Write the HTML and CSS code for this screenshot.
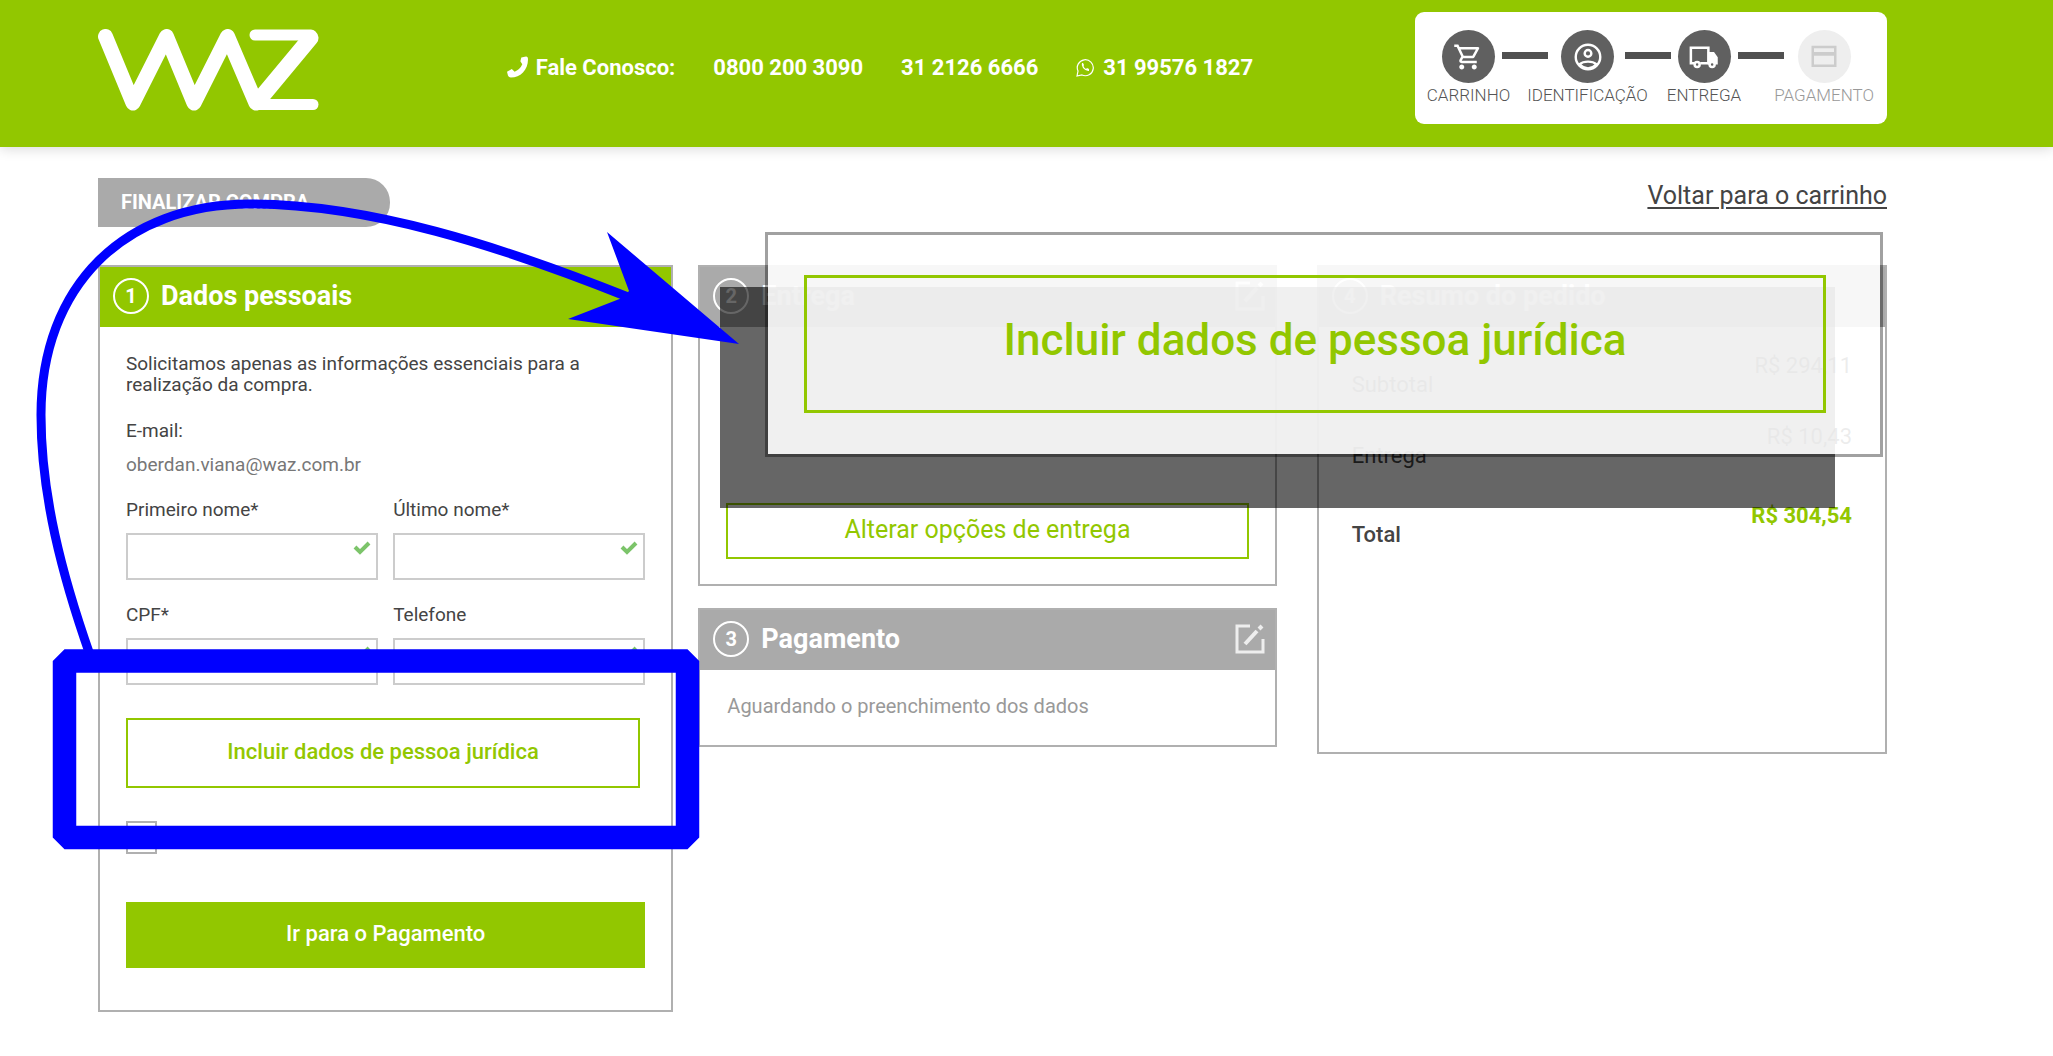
FILE: index.html
```html
<!DOCTYPE html>
<html lang="pt-BR">
<head>
    <meta charset="UTF-8">
    <meta name="viewport" content="width=device-width, initial-scale=1.0">
    <title>WAZ - Finalizar compra</title>
    <link rel="stylesheet" href="styles.css">
</head>
<body>
    <header class="topo">
        <a class="logo" href="#" aria-label="WAZ">
            <svg width="221" height="82" viewBox="0 0 221 82" fill="none" stroke="#fff" stroke-linecap="round" stroke-linejoin="round">
                <path d="M7.500 7.500 L35 74 L68.500 7.500 L96 74 L129.500 7.500 L158 74" stroke-width="15"/>
                <path d="M157 6 H213" stroke-width="11"/>
                <path d="M160 75.500 H215" stroke-width="11"/>
                <path d="M212.500 9 L161 71" stroke-width="16"/>
            </svg>
        </a>
        <ul class="contato">
            <li>
                <svg width="21" height="23" viewBox="0 0 22 23" fill="#fff"><path d="M15 1 L20 0 Q22 0 22 3 C22 14 14 22 4 22 Q2 22 1 20 L0 16 L5 13 L8 16 Q14 13 16 8 L14 5 Z"/></svg>
                Fale Conosco:
            </li>
            <li>0800 200 3090</li>
            <li>31 2126 6666</li>
            <li>
                <svg width="19" height="19" viewBox="0 0 19 19" fill="none" stroke="#fff" stroke-width="1.2"><path d="M1 18 L2 13 A8 8 0 1 1 6 17 Z"/><path d="M6 5 Q5 7 7 10 Q10 13.500 13 13 L13 11 L11 10 L10 11 Q8 10 7.500 8 L8 7 L7 5 Z" fill="#fff" stroke="none"/></svg>
                31 99576 1827
            </li>
        </ul>
        <ol class="etapas">
            <li class="etapa">
                <span class="bola"><svg width="30" height="30" viewBox="0 0 24 24" fill="#fff"><path d="M15.550 13c.75 0 1.410-.41 1.750-1.030l3.580-6.490A.996.996 0 0 0 20.010 4H5.210l-.94-2H1v2h2l3.600 7.590-1.350 2.440C4.520 15.370 5.480 17 7 17h12v-2H7l1.100-2h7.450zM6.160 6h12.150l-2.760 5H8.530L6.160 6zM7 18c-1.100 0-1.990.9-1.990 2S5.900 22 7 22s2-.9 2-2-.9-2-2-2zm10 0c-1.100 0-1.990.9-1.990 2s.89 2 1.990 2 2-.9 2-2-.9-2-2-2z"/></svg></span>
                CARRINHO
            </li>
            <li class="etapa">
                <span class="bola"><svg width="32" height="32" viewBox="0 0 24 24" fill="none" stroke="#fff" stroke-width="1.8"><circle cx="12" cy="12" r="9.200"/><circle cx="12" cy="9.300" r="2.500"/><path d="M5.500 17.500 Q8 15.500 12 15.500 T18.500 17.500 Q16 20 12 20.500 Q8 20 5.500 17.500"/></svg></span>
                IDENTIFICAÇÃO
            </li>
            <li class="etapa">
                <span class="bola"><svg width="30" height="30" viewBox="0 0 24 24" fill="none" stroke="#fff" stroke-width="2"><path d="M4 17 H1.500 V4.500 H15.500 V17 H9"/><path d="M16 9 H19.500 L22 12.500 V17 H16 Z" fill="#fff"/><circle cx="6.500" cy="18" r="2"/><circle cx="18.500" cy="18" r="2" fill="#606060"/></svg></span>
                ENTREGA
            </li>
            <li class="etapa inativa">
                <span class="bola"><svg width="30" height="30" viewBox="0 0 24 24" fill="none" stroke="#ccc" stroke-width="2"><rect x="3" y="4" width="18" height="15"/><path d="M3 9.500 H21" stroke-width="3"/></svg></span>
                PAGAMENTO
            </li>
        </ol>
    </header>

    <main class="pagina">
        <div class="titulo">
            <h1>FINALIZAR COMPRA</h1>
            <a href="#">Voltar para o carrinho</a>
        </div>

        <div class="colunas">
            <section class="caixa ativa">
                <h2><span class="numero">1</span>Dados pessoais</h2>
                <form class="dados">
                    <p>Solicitamos apenas as informações essenciais para a realização da compra.</p>
                    <p class="email-label">E-mail:</p>
                    <p class="email">oberdan.viana@waz.com.br</p>
                    <div class="campos">
                        <div class="campo">
                            <label for="nome">Primeiro nome*</label>
                            <input type="text" id="nome">
                            <svg class="ok" width="18" height="14" viewBox="0 0 18 14"><path d="M2 6 L7 11 L16 2" fill="none" stroke="#7cc46a" stroke-width="4"/></svg>
                        </div>
                        <div class="campo">
                            <label for="sobrenome">Último nome*</label>
                            <input type="text" id="sobrenome">
                            <svg class="ok" width="18" height="14" viewBox="0 0 18 14"><path d="M2 6 L7 11 L16 2" fill="none" stroke="#7cc46a" stroke-width="4"/></svg>
                        </div>
                        <div class="campo">
                            <label for="cpf">CPF*</label>
                            <input type="text" id="cpf">
                            <svg class="ok" width="18" height="14" viewBox="0 0 18 14"><path d="M2 6 L7 11 L16 2" fill="none" stroke="#7cc46a" stroke-width="4"/></svg>
                        </div>
                        <div class="campo">
                            <label for="telefone">Telefone</label>
                            <input type="text" id="telefone">
                            <svg class="ok" width="18" height="14" viewBox="0 0 18 14"><path d="M2 6 L7 11 L16 2" fill="none" stroke="#7cc46a" stroke-width="4"/></svg>
                        </div>
                    </div>
                    <button type="button" class="botao juridica">Incluir dados de pessoa jurídica</button>
                    <div class="aceite">
                        <input type="checkbox" id="ofertas">
                        <label for="ofertas">Quero receber ofertas e informações</label>
                    </div>
                    <button type="button" class="botao pagar">Ir para o Pagamento</button>
                </form>
            </section>

            <div class="meio">
                <section class="caixa entrega">
                    <h2><span class="numero">2</span>Entrega
                        <svg class="editar" width="30" height="30" viewBox="0 0 30 30" fill="none" stroke="#eee" stroke-width="3"><path d="M15 2 H2 V28 H28 V15"/><path d="M10 20 L22 7" stroke-width="4"/><path d="M24 5 L27 2" stroke-width="4"/></svg>
                    </h2>
                    <button type="button" class="botao alterar">Alterar opções de entrega</button>
                </section>
                <section class="caixa pagamento">
                    <h2><span class="numero">3</span>Pagamento
                        <svg class="editar" width="30" height="30" viewBox="0 0 30 30" fill="none" stroke="#eee" stroke-width="3"><path d="M15 2 H2 V28 H28 V15"/><path d="M10 20 L22 7" stroke-width="4"/><path d="M24 5 L27 2" stroke-width="4"/></svg>
                    </h2>
                    <p>Aguardando o preenchimento dos dados</p>
                </section>
            </div>

            <section class="caixa resumo">
                <h2><span class="numero">4</span>Resumo do pedido</h2>
                <dl>
                    <div><dt>Subtotal</dt><dd>R$ 294,11</dd></div>
                    <div><dt>Entrega</dt><dd>R$ 10,43</dd></div>
                    <div class="total"><dt>Total</dt><dd>R$ 304,54</dd></div>
                </dl>
            </section>
        </div>
    </main>

    <!-- destaque do botão de pessoa jurídica -->
    <div class="sombra"></div>
    <div class="ampliado">
        <button type="button" class="botao">Incluir dados de pessoa jurídica</button>
    </div>
    <svg class="seta" width="760" height="860" viewBox="0 0 760 860" fill="none" stroke="#00f">
        <path d="M90 655 C62 575 41 495 41 415 C41 285 125 204 250 204 C370 204 500 246 628 297" stroke-width="9"/>
        <path d="M607 232 L739 344 L568 319 L622 298 L629 291 Z" fill="#00f" stroke="none"/>
        <path d="M64.500 661 H687.500 V837.500 H64.500 Z" stroke-width="23.500" stroke-linejoin="bevel"/>
    </svg>
</body>
</html>
```
FILE: styles.css
```css
* {
    box-sizing: border-box;
}
body {
    margin: 0;
    position: relative;
    background: #fff;
    color: #444;
    font-family: Roboto, "Liberation Sans", sans-serif;
    font-size: 20px;
    line-height: 21px;
}
h1, h2, p, ul, ol, dl, dd {
    margin: 0;
    padding: 0;
}
ul, ol {
    list-style: none;
}
a {
    color: #444;
}
input, button {
    font: inherit;
}

/* topo */
.topo {
    display: flex;
    align-items: flex-start;
    justify-content: space-between;
    height: 147px;
    padding: 12px 166px 0 98px;
    background: #92c700;
    box-shadow: 0 2px 12px rgba(0, 0, 0, 0.15);
}
.logo {
    margin-top: 17px;
}
.contato {
    display: flex;
    gap: 38px;
    margin-top: 44px;
    padding-left: 26px;
    color: #fff;
    font-size: 22px;
    font-weight: 700;
}
.contato li {
    display: flex;
    align-items: center;
    gap: 8px;
}
.etapas {
    display: flex;
    gap: 17px;
    height: 112px;
    padding: 18px 13px 0 12px;
    border-radius: 9px;
    background: #fff;
    color: #555;
    font-size: 17px;
    font-weight: 300;
}
.etapa {
    position: relative;
    display: flex;
    flex-direction: column;
    align-items: center;
    gap: 2px;
}
.etapa:nth-child(3) {
    padding: 0 16px 0 2px;
}
.etapa + .etapa::before {
    content: "";
    position: absolute;
    top: 22px;
    right: calc(50% + 40px);
    width: 46px;
    height: 7px;
    background: #505050;
}
.bola {
    display: flex;
    align-items: center;
    justify-content: center;
    width: 53px;
    height: 53px;
    border-radius: 50%;
    background: #606060;
}
.inativa {
    color: #999;
}
.inativa .bola {
    background: #eee;
}

/* página */
.pagina {
    padding: 31px 166px 44px 98px;
}
.titulo {
    display: flex;
    justify-content: space-between;
    margin-bottom: 38px;
}
.titulo h1 {
    width: 292px;
    padding: 14px 23px;
    border-radius: 0 24px 24px 0;
    background: #aaa;
    color: #fff;
    font-size: 20px;
}
.titulo a {
    padding-top: 7px;
    font-size: 25px;
    text-decoration-thickness: 2px;
    text-underline-offset: 3px;
}
.colunas {
    display: grid;
    grid-template-columns: 575fr 578fr 585fr;
    gap: 25px;
    align-items: start;
}
.caixa {
    border: 2px solid #b0b0b0;
}
.caixa h2 {
    display: flex;
    align-items: center;
    gap: 12px;
    height: 60px;
    padding: 0 10px 2px 13px;
    background: #aaa;
    color: #fff;
    font-size: 27px;
}
.ativa h2 {
    background: #92c700;
}
.numero {
    display: flex;
    align-items: center;
    justify-content: center;
    width: 36px;
    height: 36px;
    border: 2px solid #fff;
    border-radius: 50%;
    font-size: 20px;
}
.editar {
    margin-left: auto;
}
.botao {
    display: block;
    padding: 0 0 3px;
    border: 2px solid #92c700;
    background: none;
    color: #92c700;
    font-weight: 500;
}

/* dados pessoais */
.dados {
    padding: 26px 26px 42px;
    font-size: 19px;
}
.email-label {
    margin-top: 25px;
}
.email {
    margin: 13px 0 24px;
    color: #777;
}
.campos {
    display: grid;
    grid-template-columns: 1fr 1fr;
    gap: 24px 15px;
}
.campo {
    position: relative;
}
.campo label {
    display: block;
    margin-bottom: 13px;
}
.campo input {
    display: block;
    width: 100%;
    height: 47px;
    border: 2px solid #ccc;
}
.ok {
    position: absolute;
    top: 42px;
    right: 7px;
}
.juridica {
    width: 99%;
    height: 70px;
    margin: 33px 0;
    font-size: 22px;
}
.aceite {
    display: flex;
    align-items: center;
    gap: 12px;
}
.aceite input {
    appearance: none;
    width: 31px;
    height: 33px;
    margin: 0;
    border: 2px solid #b0b0b0;
}
.pagar {
    width: 100%;
    height: 66px;
    margin-top: 48px;
    background: #92c700;
    color: #fff;
    font-size: 22px;
}

/* entrega e pagamento */
.alterar {
    width: 523px;
    height: 56px;
    margin: 176px auto 25px;
    font-size: 25px;
    font-weight: 400;
}
.pagamento {
    margin-top: 22px;
}
.pagamento p {
    padding: 26px 27px 28px;
    color: #999;
}

/* resumo */
.resumo {
    margin-left: 15px;
}
.resumo dl {
    height: 425px;
    padding: 28px 33px 0;
    font-size: 22px;
}
.resumo dl div {
    display: flex;
    justify-content: space-between;
    height: 71px;
}
.resumo dt {
    padding-top: 19px;
}
.resumo .total {
    padding-top: 8px;
    font-weight: 500;
}
.total dd {
    color: #92c700;
    font-weight: 700;
}

/* destaque */
.sombra {
    position: absolute;
    top: 287px;
    left: 720px;
    width: 1115px;
    height: 221px;
    background: rgba(0, 0, 0, 0.6);
}
.ampliado {
    position: absolute;
    top: 232px;
    left: 765px;
    width: 1118px;
    height: 225px;
    padding: 40px 54px 40px 36px;
    border: 3px solid rgba(0, 0, 0, 0.37);
    background: rgba(255, 255, 255, 0.9);
    background-clip: padding-box;
}
.ampliado .botao {
    width: 100%;
    height: 138px;
    padding-bottom: 8px;
    border-width: 3px;
    font-size: 44px;
}
.seta {
    position: absolute;
    top: 0;
    left: 0;
}
```
